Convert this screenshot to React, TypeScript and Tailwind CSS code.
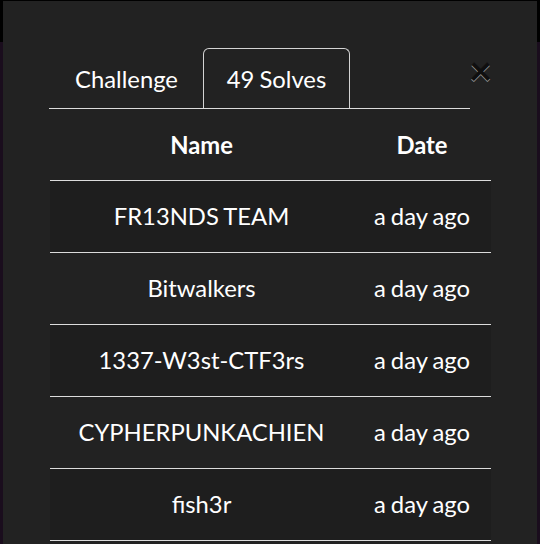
import React from "react";

const rows = [
  "FR13NDS TEAM",
  "Bitwalkers",
  "1337-W3st-CTF3rs",
  "CYPHERPUNKACHIEN",
  "fish3r",
  "extra",
];

export default function App() {
  return (
    <div
      className="relative w-[540px] h-[544px] overflow-hidden bg-[#1a0d1d]"
      style={{ fontFamily: "Lato, 'Noto Sans', sans-serif" }}
    >
      <div className="h-[42px] bg-black" />
      <div className="absolute left-[3px] top-[1px] w-[534px] h-[600px] bg-[#222222] px-[46px] pt-[47px] text-white [word-spacing:-1px]">
        <div className="flex items-start">
          <div className="flex flex-1 border-b border-[#dcdcdc] pl-px">
            <div className="h-[60px] w-[153px] flex items-center justify-center pt-[3px] text-[23.8px] border border-transparent border-b-0">
              Challenge
            </div>
            <div className="h-[60px] w-[147px] flex items-center justify-center pt-[3px] text-[23.8px] border border-[#d4d4d4] border-b-0 rounded-t-[6px]">
              49 Solves
            </div>
          </div>
          <div className="w-[21px] flex justify-center pt-[2px]">
            <span className="text-[40px] font-bold leading-none text-black opacity-55 [text-shadow:0_1px_0_#fff]">
              ×
            </span>
          </div>
        </div>
        <table className="w-[441px] ml-px border-collapse text-[23.8px]">
          <colgroup>
            <col className="w-[303px]" />
            <col className="w-[138px]" />
          </colgroup>
          <thead>
            <tr className="h-[71px] border-b border-[#dcdcdc]">
              <th className="font-bold text-center p-0 pt-[3px]">Name</th>
              <th className="font-bold text-center p-0 pt-[3px]">Date</th>
            </tr>
          </thead>
          <tbody>
            {rows.map((r, i) => (
              <tr
                key={i}
                className={
                  "h-[72px] border-b border-[#dcdcdc] " +
                  (i % 2 === 0 ? "bg-[#1e1e1e]" : "bg-[#222222]")
                }
              >
                <td className="text-center p-0 pt-[2px]">{r}</td>
                <td className="text-center p-0 pt-[2px]">a day ago</td>
              </tr>
            ))}
          </tbody>
        </table>
      </div>
    </div>
  );
}
